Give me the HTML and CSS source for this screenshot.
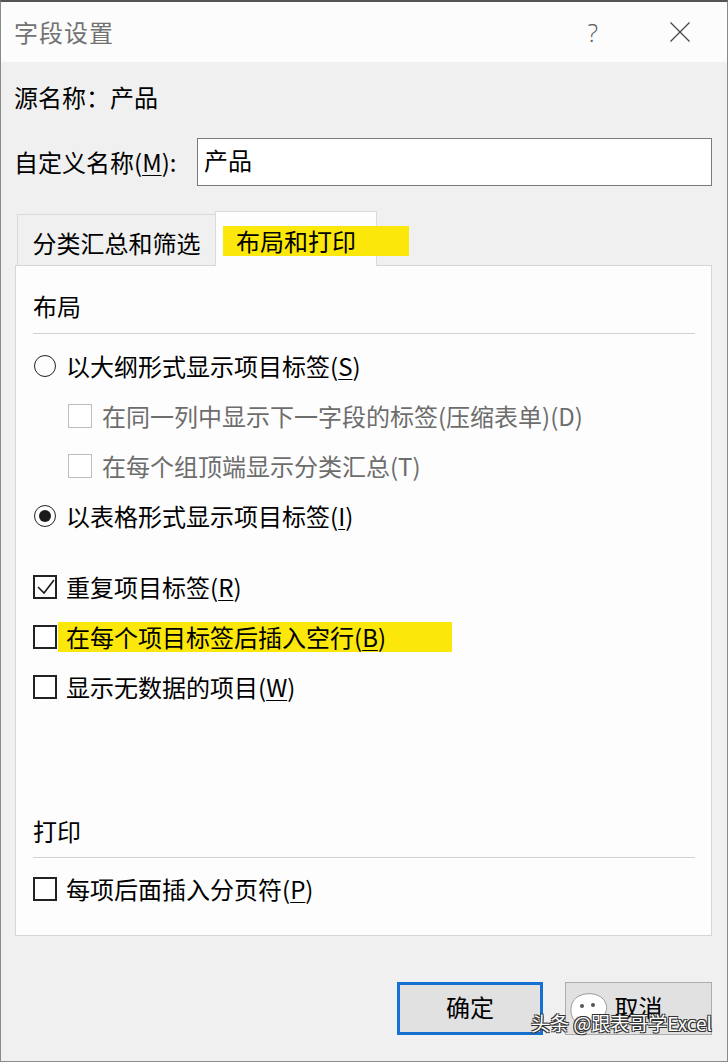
FILE: index.html
```html
<!DOCTYPE html>
<html lang="zh-CN">
<head>
    <meta charset="UTF-8">
    <meta name="viewport" content="width=device-width, initial-scale=1.0">
    <title>字段设置</title>
    <link rel="stylesheet" href="styles.css">
</head>
<body>
    <div class="dialog">
        <div class="titlebar">
            <span class="title">字段设置</span>
            <span class="help">?</span>
            <svg class="close" width="20" height="20" viewBox="0 0 20 20">
                <line x1="0.5" y1="0.5" x2="19.5" y2="19.5" />
                <line x1="19.5" y1="0.5" x2="0.5" y2="19.5" />
            </svg>
        </div>

        <div class="content">
            <div class="source">源名称：产品</div>

            <div class="custom-name">
                <label for="customName">自定义名称(<u>M</u>):</label>
                <input type="text" id="customName" value="产品">
            </div>

            <div class="tabs">
                <div class="tab">分类汇总和筛选</div>
                <div class="tab active">
                    <span class="marker"></span>
                    <span class="tab-text">布局和打印</span>
                </div>
            </div>

            <div class="panel">
                <div class="section-title">布局</div>
                <div class="rule"></div>

                <div class="group layout-group">
                    <div class="option">
                        <span class="radio"></span>
                        <span>以大纲形式显示项目标签(<u>S</u>)</span>
                    </div>
                    <div class="option sub disabled">
                        <span class="check"></span>
                        <span>在同一列中显示下一字段的标签(压缩表单)(D)</span>
                    </div>
                    <div class="option sub disabled">
                        <span class="check"></span>
                        <span>在每个组顶端显示分类汇总(T)</span>
                    </div>
                    <div class="option">
                        <span class="radio checked"></span>
                        <span>以表格形式显示项目标签(<u>I</u>)</span>
                    </div>
                </div>

                <div class="group item-group">
                    <div class="option">
                        <span class="check">
                            <svg width="20" height="20" viewBox="0 0 20 20">
                                <polyline points="3,10 9,16 19,3" />
                            </svg>
                        </span>
                        <span>重复项目标签(<u>R</u>)</span>
                    </div>
                    <div class="option">
                        <span class="check"></span>
                        <span class="highlight">在每个项目标签后插入空行(<u>B</u>)</span>
                    </div>
                    <div class="option">
                        <span class="check"></span>
                        <span>显示无数据的项目(<u>W</u>)</span>
                    </div>
                </div>

                <div class="section-title print-title">打印</div>
                <div class="rule print-rule"></div>

                <div class="group print-group">
                    <div class="option">
                        <span class="check"></span>
                        <span>每项后面插入分页符(<u>P</u>)</span>
                    </div>
                </div>
            </div>

            <div class="buttons">
                <button class="btn default">确定</button>
                <button class="btn">取消</button>
            </div>
        </div>

        <!-- watermark from the screenshot -->
        <div class="watermark">
            <svg class="wm-icon" width="44" height="34" viewBox="0 0 44 34">
                <path d="M8 30 C2 24 2 10 12 5 C22 0 36 3 39 13 C42 22 34 30 22 30 C18 30 14 31 8 30 Z" />
                <circle cx="15" cy="15" r="2" />
                <circle cx="26" cy="14" r="2" />
            </svg>
            <span class="wm-text">头条 @跟表哥学Excel</span>
        </div>
    </div>
</body>
</html>
```

FILE: styles.css
```css
body {
    margin: 0;
    padding: 0;
    font-family: "Noto Sans CJK SC", "Noto Sans", sans-serif;
    background-color: #f0f0f0;
}
.dialog {
    position: relative;
    width: 728px;
    height: 1062px;
    box-sizing: border-box;
    border: 1px solid #8a8a8a;
    border-top: 2px solid #555;
    background-color: #f0f0f0;
    overflow: hidden;
}

/* title bar */
.titlebar {
    display: flex;
    align-items: center;
    height: 60px;
    background-color: #fcfcfc;
    padding-left: 13px;
}
.title {
    font-size: 24px;
    line-height: 24px;
    letter-spacing: 1px;
    color: #727272;
}
.help {
    margin-left: auto;
    font-family: "Open Sans", "DejaVu Sans", sans-serif;
    font-weight: 300;
    font-size: 25px;
    line-height: 24px;
    color: #5a5a5a;
}
.close {
    margin-left: 72px;
    margin-right: 37px;
}
.close line {
    stroke: #4a4a4a;
    stroke-width: 1.3;
}

/* body */
.content {
    padding: 0 15px 0 13px;
    font-size: 24px;
    line-height: 24px;
    color: #000;
}
.source {
    margin-top: 23px;
}
.custom-name {
    display: flex;
    align-items: center;
    justify-content: space-between;
    margin-top: 29px;
}
.custom-name input {
    flex: 0 0 515px;
    height: 48px;
    box-sizing: border-box;
    border: 1px solid #7a7a7a;
    background-color: #fff;
    padding: 0 6px 5px;
    font-family: inherit;
    font-size: 24px;
    color: #000;
    outline: none;
}
u {
    text-underline-offset: 3px;
    text-decoration-thickness: 1px;
}

/* tabs */
.tabs {
    display: flex;
    align-items: flex-end;
    margin-top: 25px;
    padding-left: 3px;
    height: 54px;
}
.tab {
    box-sizing: border-box;
    width: 198px;
    height: 51px;
    padding-top: 16px;
    text-align: center;
    border: 1px solid #dadada;
    border-bottom: none;
    border-right: none;
    background-color: #f0f0f0;
}
.tab.active {
    position: relative;
    width: 162px;
    height: 55px;
    margin-bottom: -1px;
    padding-top: 17px;
    border-right: 1px solid #dadada;
    background-color: #fdfdfd;
    z-index: 2;
}
.marker {
    position: absolute;
    left: 7px;
    top: 14px;
    width: 186px;
    height: 30px;
    background-color: #fbe70a;
}
.tab-text {
    position: relative;
}

/* panel */
.panel {
    margin-left: 1px;
    border: 1px solid #d6d6d6;
    background-color: #fdfdfd;
    padding: 28px 16px 31px 17px;
}
.rule {
    margin-top: 15px;
    height: 1px;
    background-color: #d2d2d2;
}
.group {
    display: flex;
    flex-direction: column;
    gap: 20px;
}
.layout-group {
    margin-top: 17px;
}
.item-group {
    margin-top: 41px;
}
.print-title {
    margin-top: 117px;
}
.print-rule {
    margin-top: 14px;
}
.print-group {
    margin-top: 16px;
}
.option {
    display: flex;
    align-items: center;
    height: 30px;
    gap: 9px;
}
.option.sub {
    padding-left: 35px;
    gap: 10px;
}
.option.disabled {
    color: #6d6d6d;
}
.radio {
    box-sizing: border-box;
    width: 22px;
    height: 22px;
    margin-left: 1px;
    margin-right: 1px;
    border: 1.5px solid #222;
    border-radius: 50%;
    display: flex;
    align-items: center;
    justify-content: center;
}
.radio.checked::after {
    content: "";
    width: 12px;
    height: 12px;
    border-radius: 50%;
    background-color: #1a1a1a;
}
.check {
    box-sizing: border-box;
    width: 24px;
    height: 24px;
    border: 2px solid #222;
    background-color: #fff;
    display: flex;
    align-items: center;
    justify-content: center;
}
.disabled .check {
    border: 1px solid #bdbdbd;
}
.check polyline {
    fill: none;
    stroke: #1a1a1a;
    stroke-width: 1.6;
}
.highlight {
    box-sizing: border-box;
    width: 394px;
    margin-left: -8px;
    padding: 3px 0 3px 8px;
    background-color: #fbe70a;
}

/* buttons */
.buttons {
    display: flex;
    justify-content: flex-end;
    gap: 22px;
    margin-top: 46px;
}
.btn {
    width: 147px;
    height: 53px;
    box-sizing: border-box;
    border: 1px solid #adadad;
    background-color: #e1e1e1;
    font-family: inherit;
    font-size: 24px;
    color: #000;
    padding: 0 0 4px;
}
.btn.default {
    width: 146px;
    border: 3px solid #1670d2;
}

/* watermark overlay */
.watermark {
    position: absolute;
    right: 15px;
    bottom: 25px;
}
.wm-icon {
    position: absolute;
    left: 36px;
    top: -20px;
}
.wm-icon path {
    fill: #fff;
    stroke: #9a9a9a;
    stroke-width: 1;
}
.wm-icon circle {
    fill: #555;
}
.wm-text {
    position: relative;
    font-size: 19px;
    line-height: 24px;
    color: #fff;
    text-shadow: -1px -1px 0 #333, 1px -1px 0 #333, -1px 1px 0 #333, 1px 1px 0 #333;
}
```
